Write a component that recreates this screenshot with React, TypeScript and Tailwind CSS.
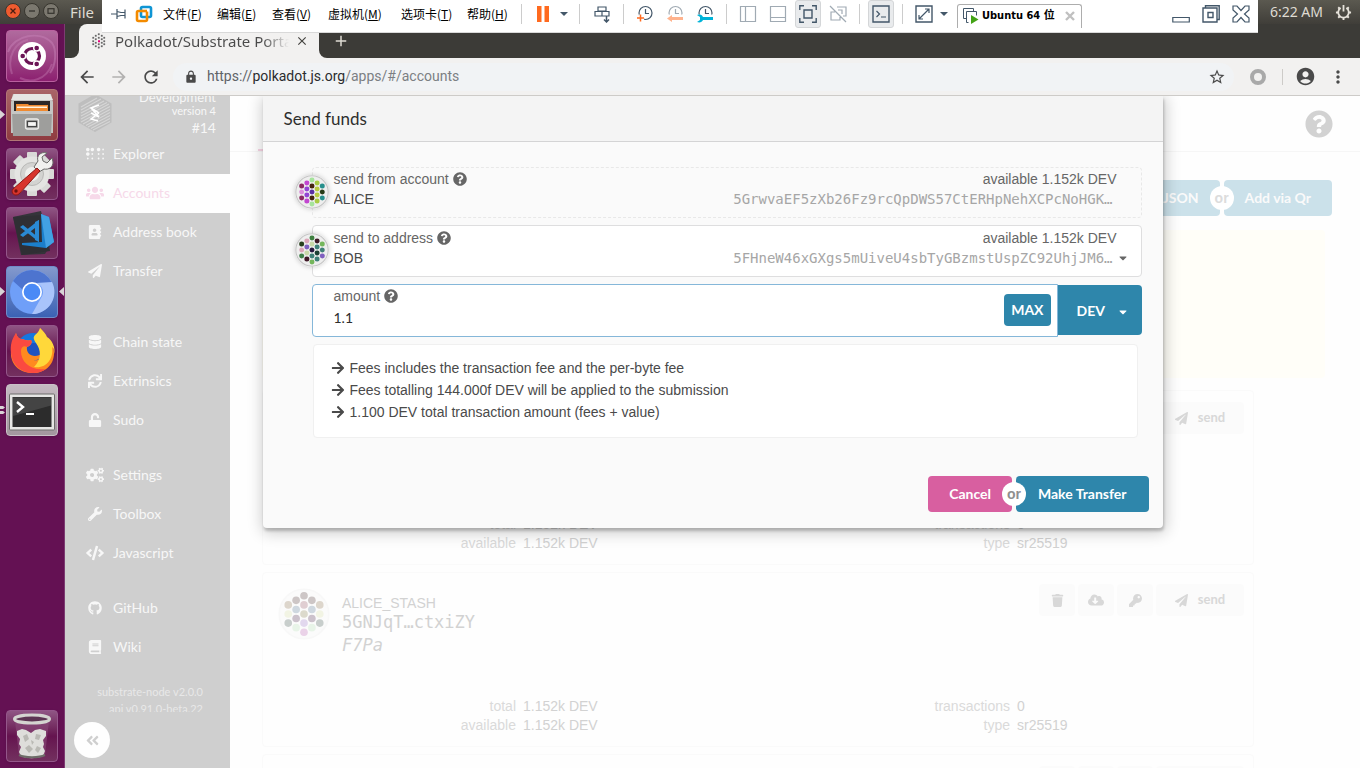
import { useState } from "react";
import type { ReactNode } from "react";
import type { IconType } from "react-icons";
import {
  FaAddressBook,
  FaAngleDoubleLeft,
  FaArrowRight,
  FaBook,
  FaBraille,
  FaCaretDown,
  FaCloudDownloadAlt,
  FaCode,
  FaCogs,
  FaDatabase,
  FaGithub,
  FaKey,
  FaPaperPlane,
  FaQuestionCircle,
  FaSync,
  FaTrash,
  FaUnlock,
  FaUsers,
  FaWrench,
} from "react-icons/fa";
import {
  MdAccountCircle,
  MdAdd,
  MdArrowBack,
  MdArrowForward,
  MdClose,
  MdLock,
  MdMoreVert,
  MdRefresh,
  MdStarBorder,
} from "react-icons/md";

/* ---------- identicons ---------- */

type DotColumns = string[][];

const aliceDots: DotColumns = [
  ["#8c2862", "#dc8fdc", "#8c2862"],
  ["#c246d0", "#9444d4", "#9444d4", "#c246d0"],
  ["#a6e49c", "#45260f", "#5a2fa2", "#45260f", "#a6e49c"],
  ["#a8cc44", "#b9cc42", "#b9cc42", "#a8cc44"],
  ["#278f8c", "#263b16", "#278f8c"],
];

const bobDots: DotColumns = [
  ["#273f1c", "#dba6b8", "#3f8048"],
  ["#dba6b8", "#7f5fbf", "#c8d8a8", "#3f1826"],
  ["#3f8040", "#c8d8a8", "#27183f", "#3f8078", "#74b65c"],
  ["#3f1826", "#3f8078", "#1c3f34", "#3f8078"],
  ["#74b65c", "#3f8078", "#7f5fbf"],
];

const stashDots: DotColumns = [
  ["#ddd6cc", "#f2f4e4", "#c8cecc"],
  ["#cdc6c6", "#cfd8e0", "#ccc2cc", "#e8f4e8"],
  ["#cdc6c6", "#e0ced2", "#dcdacc", "#e2d8ee", "#ead2e8"],
  ["#cdc6c6", "#cfd8e0", "#ccc2cc", "#e8f4e8"],
  ["#ddd6cc", "#f2f4e4", "#c8cecc"],
];

function Identicon({ dots, faded }: { dots: DotColumns; faded?: boolean }) {
  return (
    <svg viewBox="0 0 64 64" className="block h-full w-full" aria-hidden="true">
      <circle cx="32" cy="32" r="30.5" fill={faded ? "#fbfbfb" : "#eeeeee"} stroke={faded ? "#f8f8f8" : "#c4c4c4"} strokeWidth="2" />
      {dots.map((column, c) =>
        column.map((fill, r) => (
          <circle key={`${c}-${r}`} cx={32 + (c - 2) * 9.7} cy={32 + (r - (column.length - 1) / 2) * 11.2} r="4.7" fill={fill} />
        )),
      )}
    </svg>
  );
}

/* ---------- desktop panel and launcher ---------- */

function TopPanel() {
  return (
    <header className="flex h-6 shrink-0 items-center bg-linear-to-b from-[#5b5950] to-[#403e39] pl-1 pr-2 font-['Noto_Sans',sans-serif] text-[14px] text-[#dfdbd2]">
      <svg viewBox="0 0 58 18" className="h-[18px] w-[58px]" aria-hidden="true">
        <circle cx="9" cy="8" r="7.5" fill="#ef5b2f" stroke="#38362f" />
        <path d="M6.5 5.5l5 5m0-5l-5 5" stroke="#4c1d10" strokeWidth="1.3" />
        <circle cx="28" cy="8" r="7.5" fill="#7b786f" stroke="#38362f" />
        <path d="M25 8h6" stroke="#34322d" strokeWidth="1.3" />
        <circle cx="47" cy="8" r="7.5" fill="#7b786f" stroke="#38362f" />
        <rect x="44" y="5.7" width="6" height="4.6" fill="none" stroke="#34322d" strokeWidth="1.2" />
      </svg>
      <button className="ml-2 text-[15px] leading-6">File</button>
      <span className="ml-auto mr-3 leading-6">6:22 AM</span>
      <svg viewBox="0 0 18 18" className="h-[17px] w-[17px]" fill="none" stroke="#e6e2da" aria-label="System menu">
        <path d="M6 4.2a5.6 5.6 0 1 0 6 0M9 1v7" strokeWidth="1.9" />
        <path d="M3.4 3.4l1.6 1.6M14.6 3.4L13 5M1 9h2.4M17 9h-2.4M3.4 14.6L5 13M14.6 14.6L13 13M9 17v-2.4" strokeWidth="2" />
      </svg>
    </header>
  );
}

function Tile({ label, className, children }: { label: string; className: string; children: ReactNode }) {
  return (
    <button aria-label={label} className={`flex size-[52px] shrink-0 items-center justify-center rounded-[4px] border shadow-sm ${className}`}>
      <svg viewBox="0 0 52 52" className="size-[52px] shrink-0" aria-hidden="true">
        {children}
      </svg>
    </button>
  );
}

function Launcher() {
  const plain = "border-[#94568a] bg-linear-to-b from-[#8f5584] via-[#65134f] to-[#73305f]";
  return (
    <nav aria-label="Launcher" className="relative flex w-[65px] shrink-0 flex-col gap-[7px] border-r border-[#7d3b72] bg-[#641153] pb-1.5 pl-1.5 pt-1.5">
      <Tile label="Search" className="border-[#b9609f] bg-linear-to-b from-[#b06a9e] to-[#8c1f70]">
        <path d="M2 22C8 5 34 0 46 13c5 7 4 22-2 30" fill="none" stroke="#c57fb5" strokeWidth="2" opacity=".5" />
        <path d="M6 44C0 26 10 12 22 10M14 48c10 5 26 3 32-14" fill="none" stroke="#c57fb5" strokeWidth="2" opacity=".4" />
        <circle cx="26" cy="26" r="14" fill="#fff" />
        <circle cx="26" cy="26" r="7.5" fill="none" stroke="#6b1455" strokeWidth="3.2" />
        <g fill="#6b1455" stroke="#fff" strokeWidth="1.4">
          <circle cx="16.7" cy="26" r="3" />
          <circle cx="30.7" cy="18" r="3" />
          <circle cx="30.7" cy="34" r="3" />
        </g>
      </Tile>
      <Tile label="Files" className="border-[#b27676] bg-linear-to-b from-[#a96468] to-[#8f3b40]">
        <path d="M7 5h38l2 8v31H5V13z" fill="#c4c4c2" />
        <path d="M8 5h36l3 6H5z" fill="#e6e6e4" />
        <rect x="8" y="12" width="36" height="11" fill="#2b2626" />
        <path d="M10 15h12l1 1h19v7H10z" fill="#ef8a30" />
        <path d="M11 17.500h30v1.500H11z" fill="#fff3df" />
        <path d="M6 22h40l-1 25H7z" fill="#9e9e9c" />
        <path d="M6 22h40v3H6z" fill="#c6c6c4" />
        <rect x="19.500" y="30" width="13" height="10" rx="2" fill="#a4a4a2" stroke="#ececea" strokeWidth="1.3" />
        <rect x="21.500" y="32.500" width="9" height="5" fill="#f6f6f4" stroke="#444" strokeWidth="1.2" />
      </Tile>
      <Tile label="Settings" className={plain}>
        <g transform="translate(26 26)" fill="#d9d9d7">
          <rect x="-5" y="-22" width="10" height="44" rx="1" />
          <rect x="-5" y="-22" width="10" height="44" rx="1" transform="rotate(45)" />
          <rect x="-5" y="-22" width="10" height="44" rx="1" transform="rotate(90)" />
          <rect x="-5" y="-22" width="10" height="44" rx="1" transform="rotate(135)" />
          <circle r="17.500" fill="#e4e4e2" />
          <circle r="11.500" fill="#d3d3d1" stroke="#b9b9b7" />
          <circle r="7" fill="#efefed" />
        </g>
        <path d="M28 19l5 5 5-3c5 1 9-2 9-7l-1-4-5 5-4-2-1-4 5-4c-6-2-11 3-9 8z" fill="#f1f1ef" stroke="#6b6b69" />
        <path d="M31 20l-24 21c-3 4 2 8 6 5L34 23z" fill="#d8342c" stroke="#8c1713" />
        <circle cx="10" cy="43" r="1.700" fill="#6d1010" />
      </Tile>
      <Tile label="Code editor" className={plain}>
        <path d="M7 10l28-6 9 35-5 8-24 1z" fill="#34343a" />
        <path d="M7 10l9 38 28-4-7-36z" fill="#2f2f34" />
        <path d="M35 7l8 3 5 25-8 6-24-3v-2l20-1z" fill="#1b7fcb" />
        <path d="M35 7l8 3 5 25-8 6z" fill="#42a1e3" />
        <path d="M14 20l3-2 16 13v4zM33 13v5L17 30l-3-2z" fill="#2a8ad4" />
        <path d="M29 15l4-2v22l-4-2z" fill="#2a8ad4" />
      </Tile>
      <Tile label="Browser" className="border-[#6f8cc9] bg-linear-to-b from-[#8499cd] to-[#3b62b4]">
        <circle cx="26" cy="26" r="22" fill="#6f9ff8" />
        <path d="M7 15A22 22 0 0 1 46 17H26a9.500 9.500 0 0 0-9 7z" fill="#4d74cf" />
        <path d="M46 16a22 22 0 0 1-20 32l9-16a9.500 9.500 0 0 0-5-15z" fill="#a9c4fb" />
        <circle cx="26" cy="26" r="10" fill="#fff" />
        <circle cx="26" cy="26" r="8.300" fill="#4a8af6" />
      </Tile>
      <Tile label="Firefox" className={plain}>
        <circle cx="27" cy="25" r="17" fill="#1577e0" />
        <circle cx="28" cy="30" r="12" fill="#2b2f9e" opacity=".5" />
        <path d="M10 8c1 4 3 6 6 6 3 1 6 2 9 1 2 3-1 6-4 7-1 5 3 9 8 9 3 0 5-1 7-3 0 8-11 10-15 3 3 6 17 8 18-8C41 13 31 11 34 3c3 3 5 6 6 9 5 4 8 10 8 16 0 12-9 20-21 20C12 48 4 38 5 26c0-7 3-12 5-18z" fill="#ff8a1f" />
        <path d="M10 8C6 14 4 20 5 28c1 12 10 20 22 20 6 0 10-2 13-4-16 2-25-7-25-18 0-4 3-6 6-4 3-1 6-4 4-7-3 1-6 0-9-1-3 0-5-2-6-6z" fill="#fb4a40" />
        <path d="M34 3c-2 8-10 6-4 15 5 7 6 16-2 24 12 2 20-8 18-20 2 1 2 4 2 7 2-6-2-14-7-17-1-3-4-6-7-9z" fill="#ffd83a" />
      </Tile>
      <Tile label="Terminal" className="border-[#c9c1c7] bg-linear-to-b from-[#c4bac1] to-[#a3979f]">
        <rect x="3.500" y="10" width="45" height="36" rx="1" fill="#e6e6e4" stroke="#6c6c6a" />
        <rect x="6.500" y="13" width="39" height="30" fill="#2c2c2c" />
        <path d="M7 13.500h38v8L7 32z" fill="#4b4b4b" opacity=".8" />
        <path d="M11 18l6 5-6 5" fill="none" stroke="#fff" strokeWidth="2.400" />
        <path d="M20 30h8" stroke="#fff" strokeWidth="2" />
      </Tile>
      <div className="mt-auto">
        <Tile label="Trash" className={plain}>
          <path d="M9 11l4 34c4 4 22 4 26 0l4-34z" fill="#8b4b79" opacity=".6" />
          <path d="M11 21l5-2 4 1 5 3 4-3 5-1 6 2v5l-3 4 1 4-1 3 2 4-2 5c-7 3-16 3-22 0l-2-4 2-5-2-3 1-5-3-4z" fill="#dededb" />
          <path d="M17 26l4-2 2 5-4 3zM30 24l5 1-2 5-4-1zM19 38l4-3 4 4-4 4zM31 36l4 2-3 5-3-3zM25 30l3 2-2 3z" fill="#b9b9b4" />
          <ellipse cx="26" cy="9" rx="17.500" ry="4" fill="#5c3452" stroke="#d4d4d0" strokeWidth="3" />
          <path d="M13 45c6 3 20 3 26 0" fill="none" stroke="#6d6d68" strokeWidth="2" />
        </Tile>
      </div>
      <svg viewBox="0 0 64 400" className="pointer-events-none absolute left-0 top-0 h-[400px] w-16" fill="#d8d4d6" aria-hidden="true">
        <path d="M0 86l5 4.500-5 4.500zM0 263l5 4.500-5 4.500zM64 263l-5 4.500 5 4.500zM0 382h3l2 1.500-2 1.500H0zM0 387h3l2 1.500-2 1.500H0z" />
      </svg>
    </nav>
  );
}

/* ---------- virtual machine toolbar ---------- */

const vmMenus = [
  { text: "文件", key: "F", width: "w-[54px]" },
  { text: "编辑", key: "E", width: "w-[55px]" },
  { text: "查看", key: "V", width: "w-[56px]" },
  { text: "虚拟机", key: "M", width: "w-[73px]" },
  { text: "选项卡", key: "T", width: "w-[66px]" },
  { text: "帮助", key: "H", width: "w-[54px]" },
];

function VmIcon({ label, boxed, faded, children }: { label: string; boxed?: boolean; faded?: boolean; children: ReactNode }) {
  return (
    <button
      aria-label={label}
      className={`flex h-7 w-[26px] shrink-0 items-center justify-center rounded-[3px] ${boxed ? "border border-[#d4d6d8] bg-[#e9ebed]" : ""} ${faded ? "opacity-50" : ""}`}
    >
      <svg viewBox="0 0 18 18" className="size-[18px] shrink-0" fill="none" stroke="#435769" strokeWidth="1.2" aria-hidden="true">
        {children}
      </svg>
    </button>
  );
}

function VmSeparator() {
  return <span className="h-5 w-px shrink-0 bg-[#cccccc]" />;
}

function VmClock() {
  return (
    <>
      <circle cx="9.500" cy="8" r="6.500" />
      <path d="M9.500 4v4.500H13" />
    </>
  );
}

function VmCaret() {
  return (
    <svg viewBox="0 0 8 4" className="h-1 w-2 shrink-0" fill="#435769" aria-hidden="true">
      <path d="M0 0h8L4 4z" />
    </svg>
  );
}

function VmToolbar() {
  return (
    <div className="absolute left-[102px] right-[102px] top-0 flex h-[33px] items-center border-b border-[#d9d9d9] bg-white pb-[5px] pl-2 font-['Noto_Sans_CJK_SC',sans-serif] text-[12px] text-black">
      <svg viewBox="0 0 18 14" className="h-3.5 w-[18px]" fill="none" stroke="#435769" strokeWidth="1.200" aria-label="Pin">
        <path d="M1 7h6M7 2v10M7 4.500l4 1h4V2.500M7 9.500l4-1h4v3M15 2.500v9" />
      </svg>
      <svg viewBox="0 0 18 18" className="ml-[7px] mr-2.5 size-[18px]" fill="none" strokeWidth="2.600" aria-label="Workstation">
        <rect x="6" y="2" width="10" height="10" rx="1.500" stroke="#0f95d4" />
        <path d="M12 6.500v8a1.500 1.500 0 0 1-1.500 1.500h-7A1.500 1.500 0 0 1 2 14.500v-7A1.500 1.500 0 0 1 3.500 6H6" stroke="#f38b00" />
        <path d="M6 6h6" stroke="#f38b00" />
      </svg>
      {vmMenus.map((menu) => (
        <button key={menu.key} className={`shrink-0 whitespace-nowrap text-left leading-7 ${menu.width}`}>
          {menu.text}(<u>{menu.key}</u>)
        </button>
      ))}
      <VmSeparator />
      <div className="flex w-[57px] items-center gap-[11px] pl-[15px]">
        <svg viewBox="0 0 12 16" className="h-4 w-3" fill="#ff6a1f" aria-label="Pause">
          <path d="M0 0h4.500v16H0zM7.500 0H12v16H7.500z" />
        </svg>
        <VmCaret />
      </div>
      <VmSeparator />
      <div className="flex w-[43px] justify-center">
        <VmIcon label="Send keys">
          <path d="M5 2h8v4H5zM2 6.500h7V11H2zM9 6.500h7V11H9z" />
          <path d="M13.500 11v6M11 14.500l2.500 2.500 2.500-2.500" strokeWidth="1.500" />
        </VmIcon>
      </div>
      <VmSeparator />
      <div className="flex w-[102px] items-center justify-center gap-1">
        <VmIcon label="Take snapshot">
          <VmClock />
          <path d="M1 13h7M4.500 9.500v7" stroke="#fff" strokeWidth="4" />
          <path d="M1 13h7M4.500 9.500v7" stroke="#ff6a1f" strokeWidth="1.500" />
        </VmIcon>
        <VmIcon label="Revert snapshot" faded>
          <VmClock />
          <path d="M0 9.500h18V18H0z" fill="#fff" stroke="none" />
          <path d="M1 13.500l5-3.500v2h11v3H6v2z" fill="#ff6a1f" stroke="none" />
        </VmIcon>
        <VmIcon label="Manage snapshots">
          <VmClock />
          <path d="M0 9.500h18V18H0z" fill="#fff" stroke="none" />
          <path d="M1 10c4-1 5 0 6 2h10v3H7c-1 2-3 3-6 2l3-2v-3z" fill="#00b3d8" stroke="none" />
        </VmIcon>
      </div>
      <VmSeparator />
      <div className="flex w-[132px] items-center justify-center gap-1">
        <VmIcon label="Side panel" faded>
          <path d="M1.500 1.500h15v15h-15zM6.500 1.500v15" />
        </VmIcon>
        <VmIcon label="Bottom panel" faded>
          <path d="M1.500 1.500h15v15h-15zM1.500 12.500h15" />
        </VmIcon>
        <VmIcon label="Full screen" boxed>
          <path d="M5 5h8v8H5zM.800 5V.800H5M13 .800h4.200V5M17.200 13v4.200H13M5 17.200H.800V13" strokeWidth="1.400" />
        </VmIcon>
        <VmIcon label="Unity" faded>
          <path d="M1 1l16 16M8 2h9v9h-3M6 7H2v8h9v-3M9 5h4v4" />
        </VmIcon>
      </div>
      <VmSeparator />
      <div className="flex w-[42px] justify-center">
        <VmIcon label="Console" boxed>
          <path d="M1 1h16v16H1z" strokeWidth="1.400" />
          <path d="M4.500 6l3 3-3 3M9 12h5" />
        </VmIcon>
      </div>
      <VmSeparator />
      <div className="flex w-[54px] items-center gap-[3px] pl-2">
        <VmIcon label="Stretch">
          <path d="M1 1h16v16H1z" strokeWidth="1.400" />
          <path d="M4 14L14 4M10 4h4v4M4 10v4h4" />
        </VmIcon>
        <VmCaret />
      </div>
      <div className="mt-1 flex h-6 w-[125px] shrink-0 items-center rounded-t-[3px] border border-b-0 border-[#adadad] pl-[5px] pr-1.5 font-['DejaVu_Sans_Condensed','DejaVu_Sans','Noto_Sans_CJK_SC',sans-serif] text-[11px] font-bold">
        <svg viewBox="0 0 16 16" className="mr-[3px] size-4 shrink-0" fill="none" stroke="#435769" aria-hidden="true">
          <path d="M3 10.500H.500v-10h10V3M5.500 14.500H3.500v-11h10v4" />
          <path d="M8 7l7.500 4.500L8 16z" fill="#43a316" stroke="none" />
        </svg>
        <span className="whitespace-nowrap">Ubuntu 64 位</span>
        <button aria-label="Close machine tab" className="ml-auto">
          <svg viewBox="0 0 10 10" className="size-2.5" stroke="#c0c0c0" strokeWidth="2.400" aria-hidden="true">
            <path d="M1 1l8 8M9 1L1 9" />
          </svg>
        </button>
      </div>
      <div className="ml-auto flex gap-1 pr-1">
        <VmIcon label="Minimize">
          <path d="M.800 12.500h16.500v4.500H.800z" />
        </VmIcon>
        <VmIcon label="Restore">
          <path d="M1 3h14v14H1zM3.500 3V.800h13.700V14.500H15M6 7.500h5v5H6z" strokeWidth="1.400" />
        </VmIcon>
        <VmIcon label="Close">
          <path d="M1 1h4l4 4.500L13 1h4v4l-4.500 4 4.500 4v4h-4l-4-4.500L5 17H1v-4l4.500-4L1 5z" strokeWidth="1.200" />
        </VmIcon>
      </div>
    </div>
  );
}

/* ---------- browser chrome ---------- */

function BrowserChrome() {
  return (
    <div className="shrink-0 border-b border-[#cdcbc8] bg-[#f2f1f0] font-['Noto_Sans',sans-serif] text-[14px]">
      <div className="flex h-[34px]">
        <span className="w-3.5 rounded-br-lg bg-[#3c3b37]" />
        <div className="w-60 bg-linear-to-b from-[#3c3b37] from-50% to-[#f2f1f0] to-50%">
          <div className="flex h-full items-center rounded-t-lg bg-[#f2f1f0] pl-3 pr-2.5">
            <svg viewBox="0 0 16 16" className="mr-2 size-4 shrink-0" fill="#6a6a6a" aria-hidden="true">
              <path d="M7 .500h1.500V2H7zM4 2h1.500v1.500H4zM10 2h1.500v1.500H10zM1.500 4H3v1.500H1.500zM7 4h1.500v1.500H7zM12.500 4H14v1.500h-1.500zM4 5.500h1.500V7H4zM10 5.500h1.500V7H10zM1.500 7.500H3V9H1.500zM12.500 7.500H14V9h-1.500zM4 9h1.500v1.500H4zM10 9h1.500v1.500H10zM1.500 10.500H3V12H1.500zM7 10.500h1.500V12H7zM12.500 10.500H14V12h-1.500zM4 12.500h1.500V14H4zM10 12.500h1.500V14H10zM7 13.800h1.500v1.500H7z" stroke="#6a6a6a" strokeWidth=".3" />
              <path d="M7 7.200h2v2H7z" fill="#e6007a" />
            </svg>
            <span className="flex-1 overflow-hidden whitespace-nowrap bg-linear-to-r from-[#4a4a4a] from-85% to-transparent bg-clip-text text-[15px] leading-5 text-transparent">
              Polkadot/Substrate Portal
            </span>
            <button aria-label="Close tab" className="ml-1.5">
              <MdClose className="size-3.5 text-[#44433f]" />
            </button>
          </div>
        </div>
        <div className="flex flex-1 items-center rounded-bl-lg bg-[#3c3b37] pl-[13px]">
          <button aria-label="New tab">
            <MdAdd className="size-[18px] text-[#dedbd3]" />
          </button>
        </div>
      </div>
      <div className="flex h-[37px] items-center pl-3 pr-3 text-[#4a4a4a]">
        <button aria-label="Back">
          <MdArrowBack className="size-5" />
        </button>
        <button aria-label="Forward" className="ml-3 text-[#b2b1b0]">
          <MdArrowForward className="size-5" />
        </button>
        <button aria-label="Reload" className="ml-3">
          <MdRefresh className="size-5" />
        </button>
        <div className="ml-3 flex h-7 flex-1 items-center rounded-full bg-[#f1f3f5] pl-[11px] pr-2">
          <MdLock className="mr-[9px] size-3.5" />
          <span className="flex-1 font-['Roboto',sans-serif] text-[#7c7f83]">
            <span className="text-[#5f6368]">https://</span>
            <span className="text-[#2b2c2e]">polkadot.js.org</span>/apps/#/accounts
          </span>
          <button aria-label="Bookmark">
            <MdStarBorder className="size-[18px]" />
          </button>
        </div>
        <span className="ml-4 size-4 rounded-full border-4 border-[#a9a9a9]" />
        <span className="ml-4 h-4 w-px bg-[#cdcbc8]" />
        <button aria-label="Profile" className="ml-3">
          <MdAccountCircle className="size-[21px]" />
        </button>
        <button aria-label="Menu" className="ml-3">
          <MdMoreVert className="size-5" />
        </button>
      </div>
    </div>
  );
}

/* ---------- page sidebar ---------- */

const navGroups: { label: string; icon: IconType; wide?: boolean; active?: boolean }[][] = [
  [
    { label: "Explorer", icon: FaBraille, wide: true },
    { label: "Accounts", icon: FaUsers, wide: true, active: true },
    { label: "Address book", icon: FaAddressBook },
    { label: "Transfer", icon: FaPaperPlane },
  ],
  [
    { label: "Chain state", icon: FaDatabase },
    { label: "Extrinsics", icon: FaSync },
    { label: "Sudo", icon: FaUnlock },
  ],
  [
    { label: "Settings", icon: FaCogs, wide: true },
    { label: "Toolbox", icon: FaWrench },
    { label: "Javascript", icon: FaCode, wide: true },
  ],
  [
    { label: "GitHub", icon: FaGithub },
    { label: "Wiki", icon: FaBook },
  ],
];

const groupGaps = ["", "mt-8", "mt-4", "mt-4"];

function Sidebar() {
  return (
    <aside className="flex w-[165px] shrink-0 flex-col overflow-hidden bg-[#cfcfcf] font-['Lato',sans-serif] text-[#f7f7f7]">
      <div className="flex h-[39px] shrink-0 items-end justify-between pl-3 pr-3.5">
        <svg viewBox="0 0 36 40" className="-mt-1 mb-0.5 h-10 w-9 shrink-0" aria-hidden="true">
          <path d="M18 1l16.500 9.500v19L18 39 1.500 29.500v-19z" fill="#bebebe" />
          <g stroke="#d6d6d6" strokeWidth="1.100">
            <path d="M4 14L20 5M4 17L24 6M4 20L27 8M4 23L30 9.500M4 26L32 11M4 29L33 13.500M6 31L33 16.500M9 32.500L33 19.500M11 34L33 22.500M14 35.500L33 25.500M16 37L33 28.500" />
          </g>
          <path d="M22 12l-8 3 8 5M14 15l8 9-8-4M22 20l-8 6 7 2" fill="none" stroke="#fff" strokeWidth="1.500" />
        </svg>
        <div className="-mb-0.5 text-right text-[11px] leading-[14px]">
          <div className="text-[13px]">Development</div>
          <div>version 4</div>
          <div className="text-[14px] leading-[19px]">#14</div>
        </div>
      </div>
      <nav aria-label="Apps">
        {navGroups.map((group, g) => (
          <ul key={g} className={groupGaps[g]}>
            {group.map(({ label, icon: Icon, wide, active }) => (
              <li key={label} className="pl-[11px]">
                <a
                  href={`#/${label.toLowerCase().replace(" ", "")}`}
                  className={`flex h-[39px] items-center gap-2 rounded-l-[4px] pb-0.5 pl-2 text-[14px] ${active ? "bg-[#fefefe] text-[#f6d9e9]" : ""}`}
                >
                  <span className="flex w-[21px] justify-center">
                    <Icon className={wide ? "size-[18px]" : "size-[14px]"} />
                  </span>
                  {label}
                </a>
              </li>
            ))}
          </ul>
        ))}
      </nav>
      <div className="mt-4 h-[29px] shrink-0 overflow-hidden pr-[27px] text-right text-[11px] leading-[17px] text-[#e8e8e8]">
        <div>substrate-node v2.0.0</div>
        <div>api v0.91.0-beta.22</div>
      </div>
      <button aria-label="Collapse sidebar" className="ml-[9px] mt-2.5 flex size-9 shrink-0 items-center justify-center rounded-full bg-[#fefefe] text-[#cfcfcf]">
        <FaAngleDoubleLeft className="size-[15px]" />
      </button>
    </aside>
  );
}

/* ---------- accounts page ---------- */

function CardButton({ icon: Icon, label, text }: { icon: IconType; label: string; text?: string }) {
  return (
    <button
      aria-label={label}
      className={`flex h-8 items-center justify-center gap-2.5 rounded-[4px] bg-[#fbfbfb] font-['Lato',sans-serif] text-[13px] font-bold text-[#d8d8d8] ${text ? "w-[88px]" : "w-9"}`}
    >
      <Icon className={label === "Backup" ? "size-4" : "size-[13px]"} />
      {text}
    </button>
  );
}

function Fact({ name, value }: { name: string; value: string }) {
  return (
    <div className="flex gap-[7px] leading-[19px]">
      <dt className="flex-1 text-right text-[#dadada]">{name}</dt>
      <dd className="w-[238px] text-[#d2d2d2]">{value}</dd>
    </div>
  );
}

function AccountCard({ name, address, tags }: { name?: string; address?: string; tags?: string }) {
  return (
    <article className="flex h-[175px] shrink-0 flex-col rounded-[4px] border border-[#fafafa] bg-[#fefefe] pl-[15px] pr-[9px] text-[14px] text-[#d2d2d2]">
      <div className="flex pt-[11px]">
        <div className="mt-1 size-[52px]">
          <Identicon dots={stashDots} faded />
        </div>
        <div className="ml-3 flex-1 pt-2.5">
          <div className="leading-[18px]">{name}</div>
          <div className="font-['DejaVu_Sans_Mono',monospace] text-[17px] leading-5">{address}</div>
          <div className="font-['DejaVu_Sans_Mono',monospace] text-[17px] italic leading-[26px]">{tags}</div>
        </div>
        <div className="flex gap-[3px]">
          <CardButton icon={FaTrash} label="Forget" />
          <CardButton icon={FaCloudDownloadAlt} label="Backup" />
          <CardButton icon={FaKey} label="Change password" />
          <CardButton icon={FaPaperPlane} label="Send" text="send" />
        </div>
      </div>
      <dl className="mb-[11px] mt-auto grid grid-cols-[483px_494px]">
        <Fact name="total" value="1.152k DEV" />
        <Fact name="transactions" value="0" />
        <Fact name="available" value="1.152k DEV" />
        <Fact name="type" value="sr25519" />
      </dl>
    </article>
  );
}

function OrBadge({ faded }: { faded?: boolean }) {
  return (
    <span className="relative z-10 -mx-[10px] flex size-6 items-center justify-center rounded-full bg-white text-[14px] font-bold">
      <span className={`font-['Liberation_Sans',sans-serif] ${faded ? "text-[#dcdcdc]" : "text-[#8f8f8f]"}`}>or</span>
    </span>
  );
}

function AccountsPage() {
  return (
    <main className="flex min-w-0 flex-1 flex-col overflow-hidden bg-[#fefefe]">
      <div className="flex h-14 shrink-0 items-center justify-between border-b border-[#f6f6f6] pl-7 pr-[27px]">
        <span className="h-full w-28 border-b-2 border-[#f6d3e3]" />
        <button aria-label="Help">
          <FaQuestionCircle className="size-7 text-[#d2d2d2]" />
        </button>
      </div>
      <div className="mt-7 flex shrink-0 items-center justify-end pr-7 font-['Lato',sans-serif] text-[14px] font-bold text-[#fafafa]">
        <button className="h-9 rounded-[4px] bg-[#cbe1ea] px-[21px] pb-0.5">Restore JSON</button>
        <OrBadge faded />
        <button className="h-9 rounded-[4px] bg-[#cbe1ea] px-[21px] pb-0.5">Add via Qr</button>
      </div>
      <div className="ml-8 mr-[35px] mt-3.5 h-[148px] shrink-0 rounded-[4px] bg-[#fffef8]" />
      <div className="ml-8 mr-[106px] mt-3 flex flex-col gap-[7px]">
        <AccountCard />
        <AccountCard name="ALICE_STASH" address="5GNJqT…ctxiZY" tags="F7Pa" />
        <AccountCard />
      </div>
    </main>
  );
}

/* ---------- send funds dialog ---------- */

function HelpMark() {
  return <FaQuestionCircle className="ml-1 size-3.5 text-[#666666]" />;
}

function AddressField(props: { id: string; label: string; name: string; address: string; dots: DotColumns; locked?: boolean }) {
  const { id, label, name, address, dots, locked } = props;
  return (
    <div className={`relative rounded-[4px] border pl-[21px] pr-6 ${locked ? "h-[51px] border-dashed border-[#e8e8e8] pt-px" : "h-[52px] border-[#dededf] bg-white pt-0.5"}`}>
      <span className="absolute -left-[18px] top-[7px] size-[34px] rounded-full shadow-[0_0_5px_rgba(0,0,0,0.2)]">
        <Identicon dots={dots} />
      </span>
      <div className="flex items-center leading-5 text-[#666666]">
        <label htmlFor={id}>{label}</label>
        <HelpMark />
        <span className="ml-auto">available 1.152k DEV</span>
      </div>
      <div className="flex items-center text-[#4a4a4a]">
        <select id={id} disabled={locked} className="h-5 flex-1 appearance-none text-[#4a4a4a] opacity-100">
          <option>{name}</option>
        </select>
        <span className="mr-1 h-[17px] overflow-hidden font-['DejaVu_Sans_Mono',monospace] leading-[17px] text-[#a6a6a6]">{address}</span>
        {!locked && <FaCaretDown className="pointer-events-none absolute right-3 size-3 text-[#666666]" />}
      </div>
    </div>
  );
}

const feeNotes = [
  "Fees includes the transaction fee and the per-byte fee",
  "Fees totalling 144.000f DEV will be applied to the submission",
  "1.100 DEV total transaction amount (fees + value)",
];

function SendDialog() {
  const [amount, setAmount] = useState("1.1");
  return (
    <section
      role="dialog"
      aria-labelledby="send-title"
      className="w-[900px] rounded-b-[4px] bg-[#fafafa] shadow-[1px_3px_3px_0_rgba(0,0,0,0.2),1px_3px_15px_2px_rgba(0,0,0,0.2)]"
    >
      <h2 id="send-title" className="border-b border-[#d4d4d5] bg-[#f4f4f4] pl-[21px] font-['Lato',sans-serif] text-[17px] leading-[45px] text-[#2e2e2e]">
        Send funds
      </h2>
      <form className="flex flex-col gap-[7px] pb-4 pl-[49px] pr-[21px] pt-[25px]" onSubmit={(event) => event.preventDefault()}>
        <AddressField id="from" label="send from account" name="ALICE" address="5GrwvaEF5zXb26Fz9rcQpDWS57CtERHpNehXCPcNoHGK…" dots={aliceDots} locked />
        <AddressField id="to" label="send to address" name="BOB" address="5FHneW46xGXgs5mUiveU4sbTyGBzmstUspZC92UhjJM6…" dots={bobDots} />
        <div className="flex items-start">
          <div className="flex h-[53px] flex-1 items-center rounded-l-[4px] border border-[#85b7d9] bg-white pl-[21px] pr-1.5">
            <div className="h-full flex-1 pt-px">
              <div className="flex items-center leading-5 text-[#666666]">
                <label htmlFor="amount">amount</label>
                <HelpMark />
              </div>
              <input
                id="amount"
                value={amount}
                onChange={(event) => setAmount(event.target.value)}
                className="block h-[22px] w-full font-['Lato',sans-serif] text-[14px] text-[#2e2e2e] outline-none"
              />
            </div>
            <button type="button" className="mb-0.5 h-8 rounded-[4px] bg-[#2e86ab] px-[7px] font-['Lato',sans-serif] text-[14px] font-bold text-white">
              MAX
            </button>
          </div>
          <div className="relative mt-px h-[50px] w-[84px] rounded-r-[4px] bg-[#2e86ab] font-['Lato',sans-serif] font-bold text-white">
            <select aria-label="Unit" className="h-full w-full appearance-none pl-[19px]">
              <option>DEV</option>
            </select>
            <FaCaretDown className="pointer-events-none absolute right-[13px] top-[21px] size-3" />
          </div>
        </div>
        <ul className="ml-px mr-1 rounded-[4px] border border-[#f0f0f0] bg-white px-[17px] pb-3.5 pt-3 text-[#4a4a4a]">
          {feeNotes.map((note) => (
            <li key={note} className="flex items-center gap-[5px] leading-[22px]">
              <FaArrowRight className="size-3.5" />
              {note}
            </li>
          ))}
        </ul>
        <div className="-mr-[7px] mt-[31px] flex items-center justify-end font-['Lato',sans-serif] font-bold text-white">
          <button type="button" className="h-9 rounded-[4px] bg-[#d85fa0] px-[21px] pb-0.5">Cancel</button>
          <OrBadge />
          <button type="submit" className="h-9 rounded-[4px] bg-[#2e86ab] px-[22px] pb-0.5">Make Transfer</button>
        </div>
      </form>
    </section>
  );
}

export default function App() {
  return (
    <div className="relative flex h-screen flex-col overflow-hidden bg-[#3c3b37] font-['Liberation_Sans',sans-serif] text-[14px]">
      <TopPanel />
      <div className="flex min-h-0 flex-1">
        <Launcher />
        <div className="flex min-w-0 flex-1 flex-col">
          <BrowserChrome />
          <div className="relative flex min-h-0 flex-1 overflow-hidden">
            <Sidebar />
            <AccountsPage />
            <div className="absolute inset-0 z-20 flex items-start justify-center">
              <SendDialog />
            </div>
          </div>
        </div>
      </div>
      <VmToolbar />
    </div>
  );
}
